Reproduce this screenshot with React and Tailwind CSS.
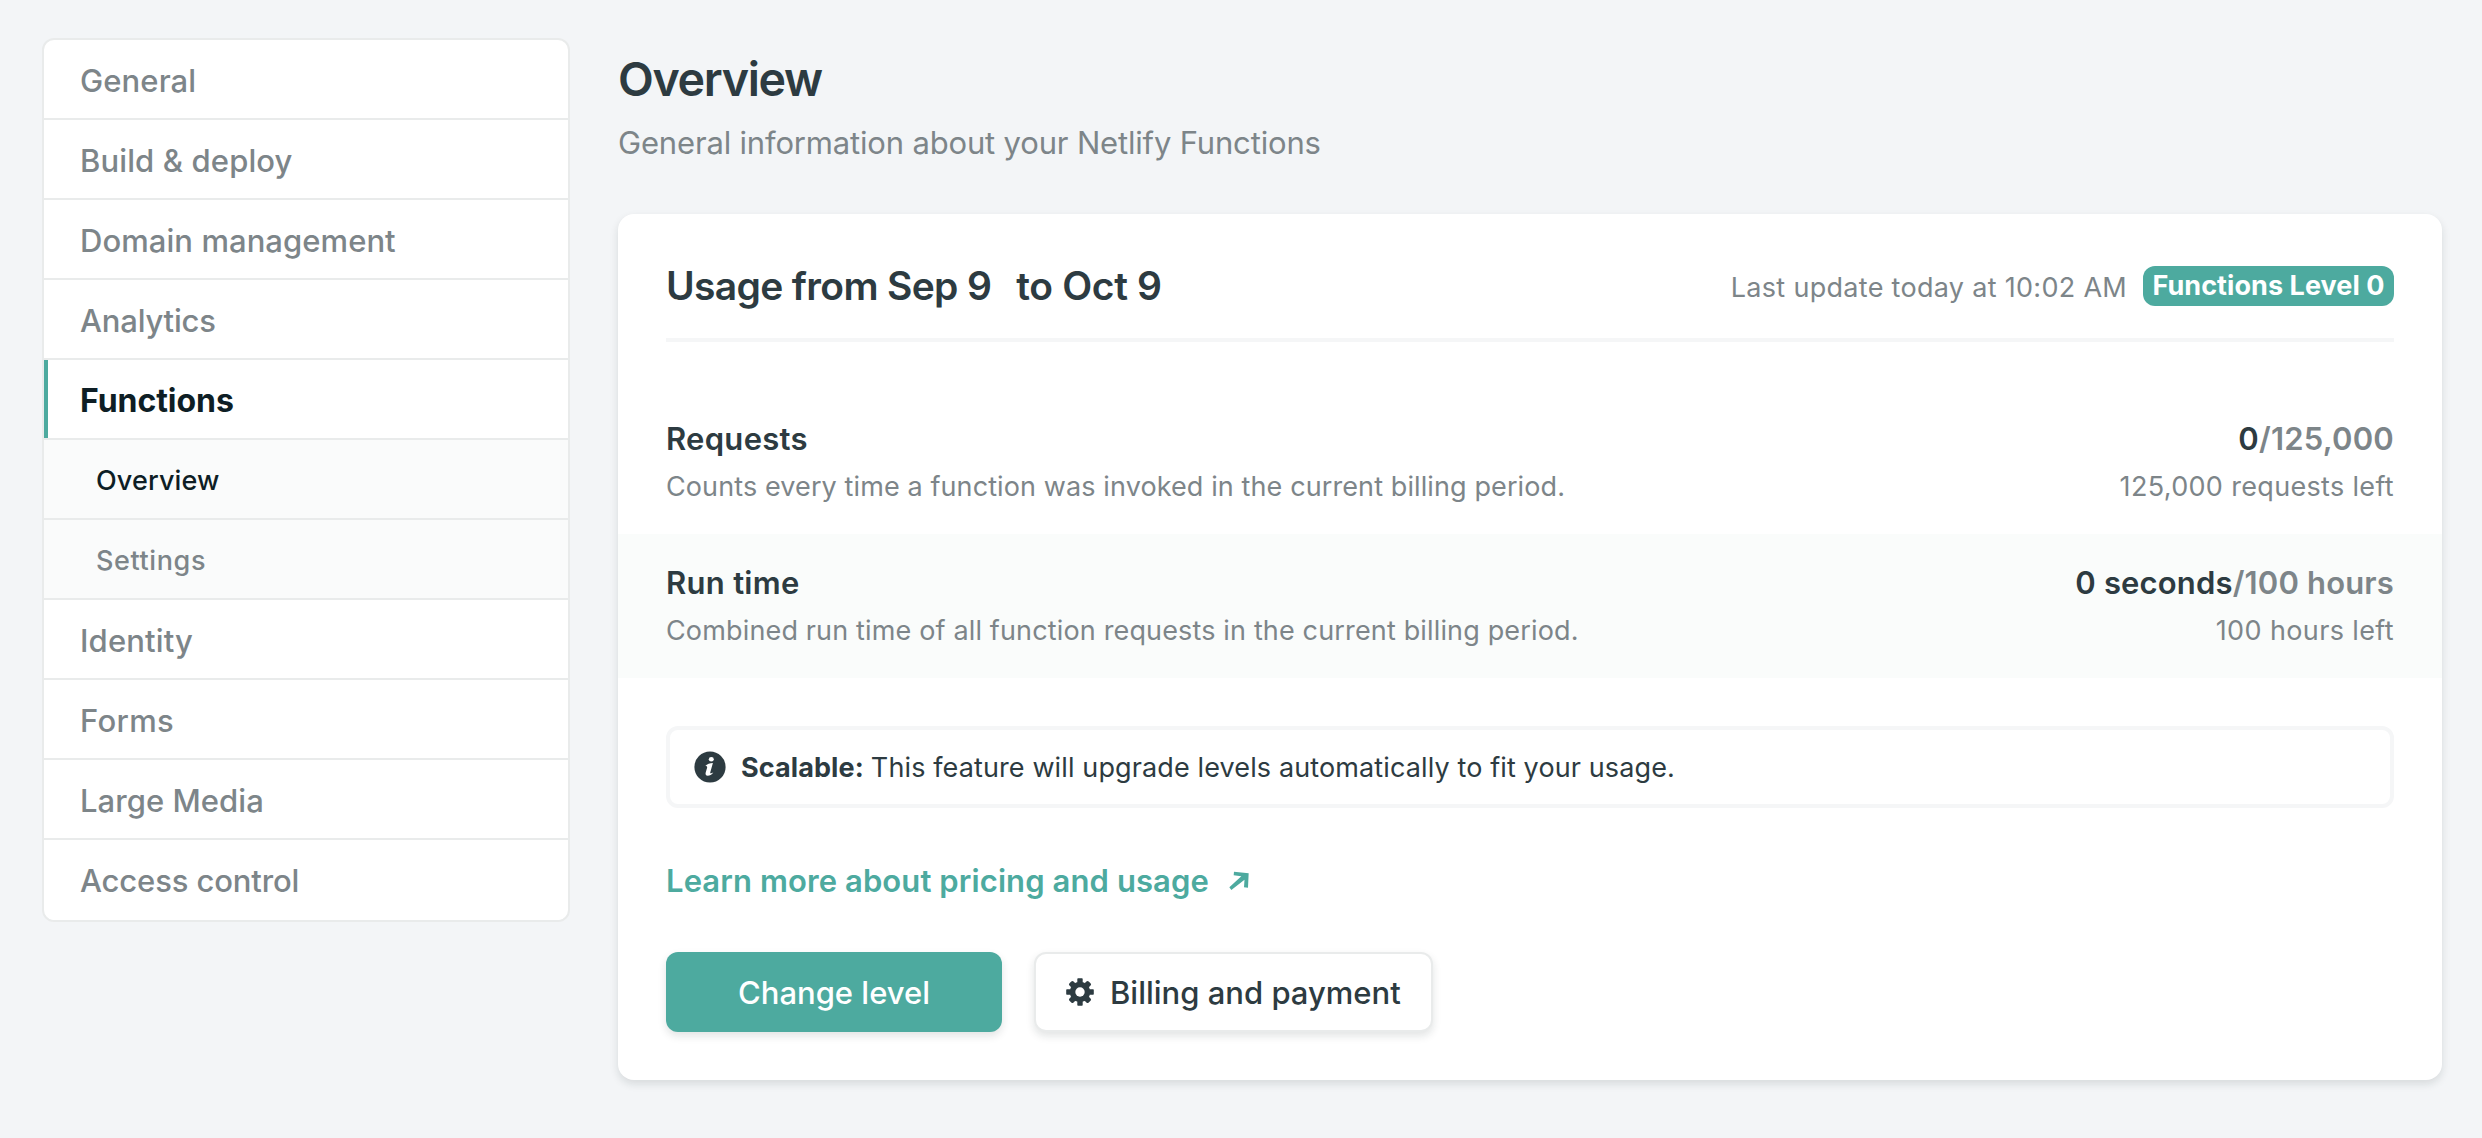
import React from "react";

const navItems = [
  { label: "General", className: "tracking-[0.1px]" },
  { label: "Build & deploy", className: "tracking-[0.12px]" },
  { label: "Domain management", className: "tracking-[0.06px]" },
  { label: "Analytics", className: "tracking-[-0.2px]" },
  { label: "Functions", active: true },
  { label: "Overview", sub: true, active: true, className: "tracking-[0.12px]" },
  { label: "Settings", sub: true, className: "tracking-[0.6px]" },
  { label: "Identity", className: "tracking-[0.14px]" },
  { label: "Forms", className: "tracking-[0.3px]" },
  { label: "Large Media", className: "tracking-[0.05px]" },
  { label: "Access control", className: "tracking-[-0.14px]" },
];

function NavItem({ label, sub, active, className = "" }) {
  const base = "flex h-20 items-center border-b-2 border-[#e9ebeb] last:border-white";
  if (sub) {
    return (
      <li
        className={`${base} bg-[#fafbfb] pt-1 pl-[52px] text-[27px] font-medium ${
          active ? "text-[#0e1e25]" : "text-[#7d8589]"
        } ${className}`}
      >
        {label}
      </li>
    );
  }
  if (active) {
    return (
      <li className={`${base} text-[32px] font-bold text-[#0e1e25]`}>
        <span className="h-full w-1 bg-[#4daa9f]" />
        <span className="pt-1 pl-8 tracking-[-0.05px]">{label}</span>
      </li>
    );
  }
  return (
    <li className={`${base} pt-1 pl-9 text-[31px] font-medium text-[#7d8589] ${className}`}>
      {label}
    </li>
  );
}

function InfoIcon() {
  return (
    <svg className="h-8 w-8 shrink-0" viewBox="0 0 32 32">
      <circle cx="16" cy="16" r="15.6" fill="#2d3b41" />
      <ellipse cx="17.3" cy="8.3" rx="2.500" ry="2.200" fill="#fff" />
      <path
        d="M11.300 15c1.800-1.800 4.600-2.900 7.600-2.900l-2.600 9.200c-.3 1 .2 1.300 1 1l2-.9c-1.500 2.100-3.700 3.300-5.600 3.300-1.900 0-2.500-1.200-2-3.100l1.400-4.900c.3-1.100-.2-1.700-1.800-1.700z"
        fill="#fff"
      />
    </svg>
  );
}

function GearIcon() {
  return (
    <svg className="h-7 w-7 shrink-0" viewBox="-14 -14 28 28" fill="#2d3b41">
      <circle r="10.200" />
      <rect x="-2.700" y="-13.800" width="5.400" height="27.600" rx="0.800" />
      <rect x="-13.800" y="-2.700" width="27.600" height="5.400" rx="0.800" />
      <g transform="rotate(45)">
        <rect x="-2.900" y="-13.600" width="5.800" height="27.200" rx="1.600" />
        <rect x="-13.600" y="-2.900" width="27.200" height="5.800" rx="1.600" />
      </g>
      <circle r="4.700" fill="#fff" />
    </svg>
  );
}

function ArrowIcon() {
  return (
    <svg className="h-5 w-5" viewBox="0 0 60 60">
      <path d="M15 2L59 7L57 50L45 49L46.500 26L7 57L1 49L37 16L14 13Z" fill="#4daa9f" />
    </svg>
  );
}

function UsageRow({ title, text, used, total, left, shaded, titleClass, textClass, usedClass, leftClass }) {
  return (
    <div className={`flex h-36 justify-between px-12 pt-[25px] leading-[48px] ${shaded ? "bg-[#fafcfb]" : ""}`}>
      <div>
        <h3 className={`text-[31px] font-semibold text-[#2d3b41] ${titleClass}`}>{title}</h3>
        <p className={`text-[27px] text-[#7d8589] ${textClass}`}>{text}</p>
      </div>
      <div className="text-right">
        <p className={`text-[31px] font-semibold text-[#7d8589] ${usedClass}`}>
          <span className="text-[#2d3b41]">{used}</span>/{total}
        </p>
        <p className={`text-[27px] text-[#7d8589] ${leftClass}`}>{left}</p>
      </div>
    </div>
  );
}

export default function App() {
  return (
    <div className="flex min-h-[1138px] items-start bg-[#f3f5f7] pr-10 pl-[42px] font-['Inter',sans-serif] whitespace-nowrap">
      <nav className="mt-[38px] w-[528px] shrink-0 overflow-hidden rounded-xl border-2 border-[#e9ebeb] bg-white">
        <ul>
          {navItems.map((item) => (
            <NavItem key={item.label + (item.sub ? "-sub" : "")} {...item} />
          ))}
        </ul>
      </nav>

      <main className="ml-12 flex-1 pt-[51px]">
        <h1 className="text-[46.6px] leading-[56px] font-semibold tracking-[-1.35px] text-[#2d3b41]">Overview</h1>
        <p className="mt-4 text-[31px] leading-10 tracking-[-0.17px] text-[#7d8589]">
          General information about your Netlify Functions
        </p>

        <section className="mt-[51px] rounded-2xl bg-white pt-12 pb-12 shadow-[0_4px_8px_0_rgba(14,30,37,0.12)]">
          <header className="mx-12 flex h-20 items-start justify-between border-b-4 border-[#f5f6f7]">
            <h2 className="flex gap-[25px] text-[39px] leading-[48px] font-semibold text-[#2d3b41]">
              <span className="tracking-[-0.66px]">Usage from Sep 9</span>
              <span className="tracking-[-0.35px]">to Oct 9</span>
            </h2>
            <div className="flex h-12 items-center gap-4">
              <span className="pt-1 text-[27px] tracking-[0.3px] text-[#7d8589]">Last update today at 10:02 AM</span>
              <span className="flex h-10 w-[251px] items-center justify-center rounded-xl bg-[#4daa9f] text-[27px] font-bold tracking-[0.06px] text-white">
                Functions Level 0
              </span>
            </div>
          </header>

          <div className="mt-12">
            <UsageRow
              title="Requests"
              text="Counts every time a function was invoked in the current billing period."
              used="0"
              total="125,000"
              left="125,000 requests left"
              titleClass="tracking-[0.29px]"
              textClass="tracking-[0.105px]"
              usedClass="tracking-[0.21px]"
              leftClass="tracking-[0.33px]"
            />
            <UsageRow
              shaded
              title="Run time"
              text="Combined run time of all function requests in the current billing period."
              used="0 seconds"
              total="100 hours"
              left="100 hours left"
              titleClass="tracking-[0.29px]"
              textClass="tracking-[0.15px]"
              usedClass="tracking-[0.16px]"
              leftClass="tracking-[0.38px]"
            />
          </div>

          <div className="mx-12 mt-12 flex h-[82px] items-center rounded-xl border-4 border-[#f5f6f7] pl-6">
            <InfoIcon />
            <p className="flex gap-[7px] pt-[3px] pl-[15px] text-[27px] text-[#2d3b41]">
              <strong className="font-bold tracking-[0.1px]">Scalable:</strong>
              <span className="tracking-[0.12px]">
                This feature will upgrade levels automatically to fit your usage.
              </span>
            </p>
          </div>

          <a className="mx-12 mt-[49px] flex items-center text-[31px] leading-[48px] font-semibold tracking-[0.1px] text-[#4daa9f]">
            Learn more about pricing and usage
            <span className="ml-5">
              <ArrowIcon />
            </span>
          </a>

          <div className="mx-12 mt-[47px] flex gap-8">
            <button className="h-20 w-[336px] rounded-xl bg-[#4daa9f] pt-0.5 text-[31px] font-medium text-white shadow-[0_4px_8px_0_rgba(14,30,37,0.12)]">
              Change level
            </button>
            <button className="flex h-20 w-[399px] items-center rounded-xl border-2 border-[#e9ebeb] bg-white pl-[30px] text-[31px] font-medium text-[#2d3b41] shadow-[0_4px_8px_0_rgba(14,30,37,0.12)]">
              <GearIcon />
              <span className="ml-4 pt-0.5">Billing and payment</span>
            </button>
          </div>
        </section>
      </main>
    </div>
  );
}
